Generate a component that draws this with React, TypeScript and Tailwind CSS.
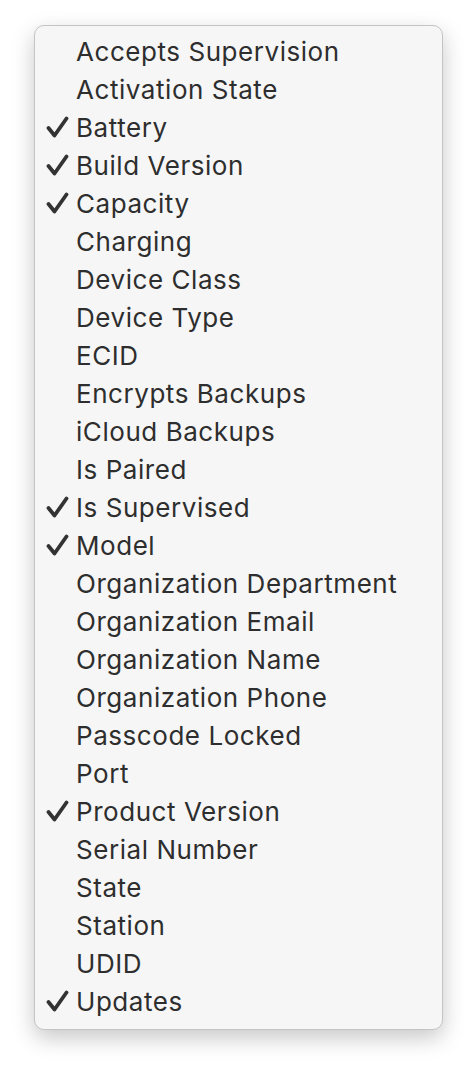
const items: { label: string; checked?: boolean }[] = [
  { label: 'Accepts Supervision' },
  { label: 'Activation State' },
  { label: 'Battery', checked: true },
  { label: 'Build Version', checked: true },
  { label: 'Capacity', checked: true },
  { label: 'Charging' },
  { label: 'Device Class' },
  { label: 'Device Type' },
  { label: 'ECID' },
  { label: 'Encrypts Backups' },
  { label: 'iCloud Backups' },
  { label: 'Is Paired' },
  { label: 'Is Supervised', checked: true },
  { label: 'Model', checked: true },
  { label: 'Organization Department' },
  { label: 'Organization Email' },
  { label: 'Organization Name' },
  { label: 'Organization Phone' },
  { label: 'Passcode Locked' },
  { label: 'Port' },
  { label: 'Product Version', checked: true },
  { label: 'Serial Number' },
  { label: 'State' },
  { label: 'Station' },
  { label: 'UDID' },
  { label: 'Updates', checked: true },
];

function Check() {
  return (
    <svg width="23" height="22" viewBox="0 0 23 22" aria-hidden>
      <path
        d="M2.5 12 L8.5 19.5 L20.5 2.5"
        fill="none"
        stroke="#333"
        strokeWidth="3.8"
        strokeLinecap="round"
        strokeLinejoin="round"
      />
    </svg>
  );
}

export default function App() {
  return (
    <div className="min-h-[1072px] w-[476px] bg-white pt-[25px] pl-[34px]">
      <ul
        role="menu"
        className="w-[409px] rounded-[10px] border border-[#c4c4c4] bg-[#f6f6f6] pt-[6px] pb-[9px] shadow-[0_8px_22px_rgba(0,0,0,0.22)]"
        style={{ fontFamily: 'Inter, "Noto Sans", sans-serif' }}
      >
        {items.map((it) => (
          <li
            key={it.label}
            role="menuitemcheckbox"
            aria-checked={!!it.checked}
            className="relative flex h-[38px] items-center pl-[41px] text-[26px] tracking-[0.55px] text-[#2e2e2e]"
          >
            {it.checked && (
              <span className="absolute left-[11px] top-[8px]">
                <Check />
              </span>
            )}
            {it.label}
          </li>
        ))}
      </ul>
    </div>
  );
}
